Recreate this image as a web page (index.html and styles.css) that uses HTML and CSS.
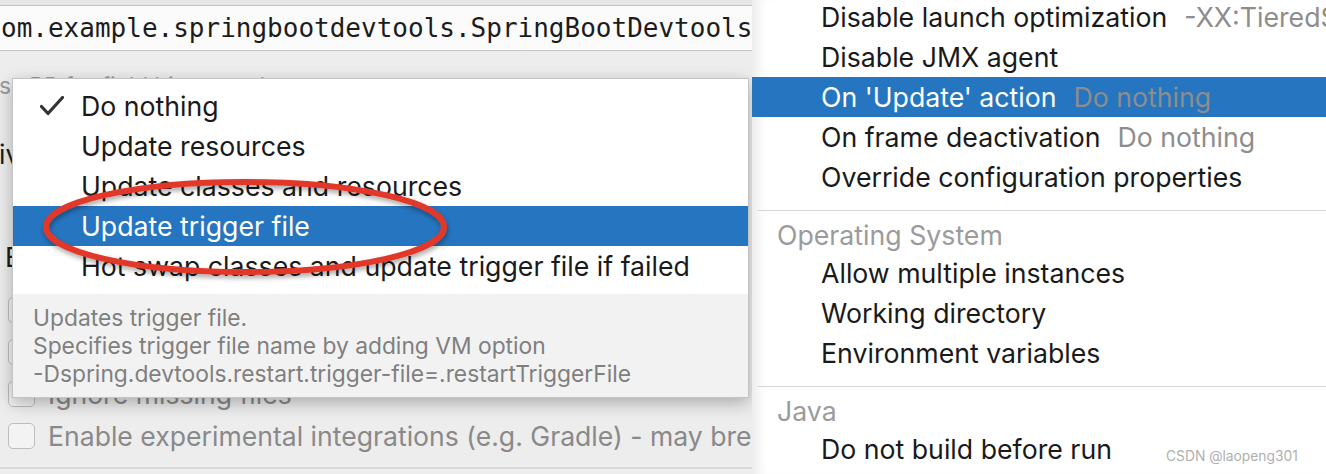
FILE: index.html
```html
<!DOCTYPE html>
<html>
<head>
<meta charset="utf-8">
<link rel="stylesheet" href="styles.css">
</head>
<body>
<div class="screen">
  <div class="left">
    <div class="strip"></div>
    <div class="field">om.example.springbootdevtools.SpringBootDevtools</div>
    <div class="hintline">ss PP for field hints text here</div>
    <div class="lbl lbl-iv">ive options</div>
    <div class="lbl lbl-e">E</div>
    <div class="cbrow first"><span class="cb"></span><span class="cbt">Restart on class change and update trigger data</span></div>
    <div class="cbrow"><span class="cb"></span><span class="cbt">Restart on resource change (with spring devtools) )</span></div>
    <div class="cbrow"><span class="cb"></span><span class="cbt">Ignore missing files</span></div>
    <div class="cbrow"><span class="cb"></span><span class="cbt">Enable experimental integrations (e.g. Gradle) - may break</span></div>
    <div class="bottomline"></div>

    <div class="popup">
      <ul class="plist">
        <li class="pitem"><span class="check"><svg width="24" height="20" viewBox="0 0 24 20"><polyline points="1.5,10.5 8,17.5 22.5,1.5" fill="none" stroke="#333" stroke-width="3.2" stroke-linecap="round" stroke-linejoin="round"/></svg></span><span>Do nothing</span></li>
        <li class="pitem"><span class="check"></span><span>Update resources</span></li>
        <li class="pitem"><span class="check"></span><span>Update classes and resources</span></li>
        <li class="pitem sel"><span class="check"></span><span>Update trigger file</span></li>
        <li class="pitem"><span class="check"></span><span>Hot swap classes and update trigger file if failed</span></li>
      </ul>
      <div class="pdesc">
        <div>Updates trigger file.</div>
        <div>Specifies trigger file name by adding VM option</div>
        <div>-Dspring.devtools.restart.trigger-file=.restartTriggerFile</div>
      </div>
    </div>

    <svg class="mark" width="440" height="130" viewBox="0 0 440 130">
      <defs>
        <filter id="sh" x="-10%" y="-30%" width="120%" height="160%">
          <feDropShadow dx="1" dy="3" stdDeviation="2.5" flood-color="#000" flood-opacity="0.35"/>
        </filter>
      </defs>
      <ellipse cx="225" cy="62" rx="199" ry="45" fill="none" stroke="#e1392b" stroke-width="6" filter="url(#sh)"/>
    </svg>
  </div>

  <div class="right">
    <ul class="rlist">
      <li class="ritem">Disable launch optimization<span class="sfx">-XX:TieredStopAtLevel=1</span></li>
      <li class="ritem">Disable JMX agent</li>
      <li class="ritem sel">On 'Update' action<span class="sfx">Do nothing</span></li>
      <li class="ritem">On frame deactivation<span class="sfx">Do nothing</span></li>
      <li class="ritem">Override configuration properties</li>
      <li class="rsep"></li>
      <li class="rhead">Operating System</li>
      <li class="ritem">Allow multiple instances</li>
      <li class="ritem">Working directory</li>
      <li class="ritem">Environment variables</li>
      <li class="rsep"></li>
      <li class="rhead">Java</li>
      <li class="ritem">Do not build before run</li>
    </ul>
    <div class="watermark">CSDN @laopeng301</div>
  </div>
</div>
</body>
</html>
```
FILE: styles.css
```css
html, body {
  margin: 0;
  padding: 0;
  background: #ececec;
}
.screen {
  width: 1326px;
  height: 474px;
  display: flex;
  overflow: hidden;
  font-family: Inter, "Liberation Sans", sans-serif;
}

/* ---------- left panel ---------- */
.left {
  position: relative;
  width: 752px;
  flex: none;
  background: #ededed;
  display: flex;
  flex-direction: column;
  overflow: hidden;
}
.strip {
  height: 5px;
  background: #e6e6e6;
  border-bottom: 1px solid #c3c3c3;
  flex: none;
}
.field {
  height: 44px;
  flex: none;
  background: #fbfbfb;
  border-bottom: 1px solid #c5c5c5;
  font-family: "DejaVu Sans Mono", monospace;
  font-size: 26px;
  line-height: 44px;
  color: #1c1c1c;
  white-space: nowrap;
  padding-left: 1px;
  overflow: hidden;
}
.hintline {
  margin-top: 21px;
  height: 28px;
  line-height: 28px;
  font-size: 22.8px;
  color: #9b9b9b;
  white-space: nowrap;
  margin-left: -1px;
}
.lbl {
  height: 28px;
  line-height: 28px;
  font-size: 26.7px;
  color: #1d1d1d;
  white-space: nowrap;
}
.lbl-iv { margin-top: 40px; margin-left: -1px; }
.lbl-e { margin-top: 75px; margin-left: 5px; }
.cbrow {
  height: 42px;
  display: flex;
  align-items: center;
  gap: 13px;
  padding-left: 8px;
  white-space: nowrap;
}
.cbrow.first { margin-top: 18px; }
.cb {
  width: 25px;
  height: 24px;
  flex: none;
  border: 1.5px solid #bdbdbd;
  border-radius: 5px;
  background: #f3f3f3;
}
.cbt {
  font-size: 26.6px;
  color: #898989;
}
.bottomline {
  margin-top: 10px;
  height: 2px;
  background: #d8d8d8;
  margin-right: -10px;
}

/* popup */
.popup {
  position: absolute;
  left: 12px;
  top: 78px;
  width: 735px;
  background: #fff;
  border: 1px solid #c4c4c4;
  box-shadow: 0 5px 16px rgba(0, 0, 0, 0.28);
}
.plist {
  list-style: none;
  margin: 0;
  padding: 7px 0 8px;
}
.pitem {
  height: 40px;
  display: flex;
  align-items: center;
  padding-left: 27px;
  font-size: 26.7px;
  color: #1a1a1a;
  white-space: nowrap;
}
.pitem.sel {
  background: #2675c0;
  color: #fff;
}
.check {
  width: 24px;
  height: 20px;
  margin-right: 17px;
  flex: none;
  display: flex;
}
.pdesc {
  background: #f2f2f2;
  padding: 10px 20px 9px;
  font-size: 22.8px;
  line-height: 28px;
  color: #7f7f7f;
  white-space: nowrap;
}
.mark {
  position: absolute;
  left: 20px;
  top: 165px;
  overflow: visible;
}

/* ---------- right panel ---------- */
.right {
  position: relative;
  flex: 1;
  background: #fff;
  box-shadow: inset 14px 0 14px -10px rgba(0, 0, 0, 0.10);
  overflow: hidden;
}
.rlist {
  list-style: none;
  margin: -3px 0 0;
  padding: 0;
}
.ritem {
  height: 40px;
  line-height: 40px;
  padding-left: 69px;
  font-size: 26.7px;
  color: #1a1a1a;
  white-space: nowrap;
}
.ritem.sel {
  background: #2675c0;
  color: #fff;
}
.sfx {
  margin-left: 17px;
  color: #8d8d8d;
}
.rsep {
  margin: 13px 0 6px 5px;
  height: 1px;
  background: #d6d6d6;
}
.rhead {
  height: 36px;
  line-height: 36px;
  padding-left: 25px;
  font-size: 26.7px;
  color: #9b9b9b;
  white-space: nowrap;
}
.watermark {
  position: absolute;
  left: 414px;
  top: 447px;
  font-size: 13.8px;
  line-height: 18px;
  color: #b0b0b0;
  white-space: nowrap;
}
```
